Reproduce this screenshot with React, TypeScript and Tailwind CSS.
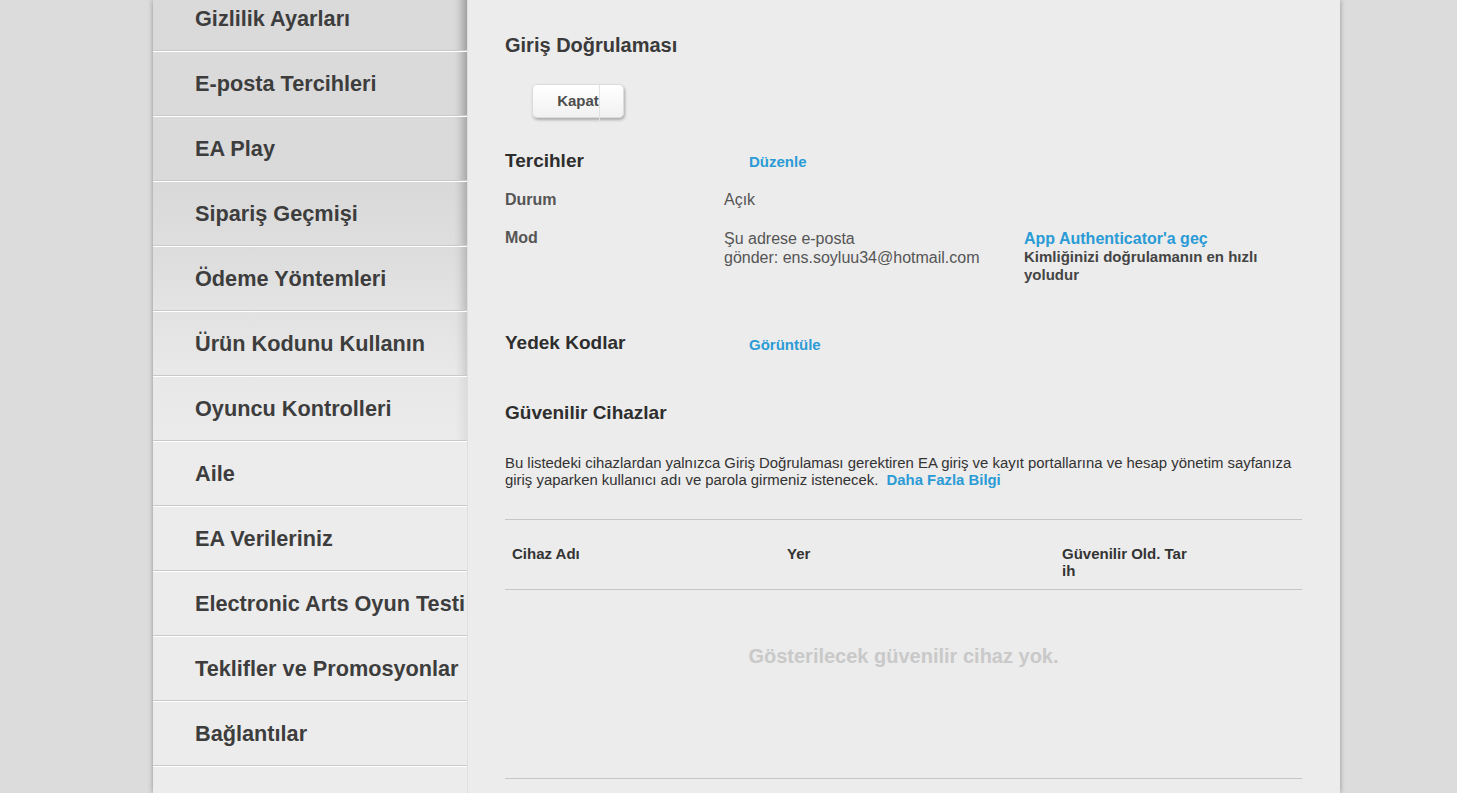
import React from "react";

const items: { label: string; cls: string }[] = [
  { label: "Gizlilik Ayarları", cls: "bg-[#dadada] shadow-[inset_-14px_0_10px_-10px_rgba(0,0,0,0.32)]" },
  { label: "E-posta Tercihleri", cls: "bg-[#dadada] shadow-[inset_-14px_0_10px_-10px_rgba(0,0,0,0.30)]" },
  { label: "EA Play", cls: "bg-[#dadada] shadow-[inset_-14px_0_10px_-10px_rgba(0,0,0,0.27)]" },
  { label: "Sipariş Geçmişi", cls: "bg-[linear-gradient(to_bottom,#d9d9d9,#dedede)] shadow-[inset_-14px_0_10px_-10px_rgba(0,0,0,0.24)]" },
  { label: "Ödeme Yöntemleri", cls: "bg-[linear-gradient(to_bottom,#dcdcdc,#e4e4e4)] shadow-[inset_-14px_0_10px_-10px_rgba(0,0,0,0.2)]" },
  { label: "Ürün Kodunu Kullanın", cls: "bg-[linear-gradient(to_bottom,#e2e2e2,#e9e9e9)] shadow-[inset_-14px_0_10px_-10px_rgba(0,0,0,0.14)]" },
  { label: "Oyuncu Kontrolleri", cls: "bg-[linear-gradient(to_bottom,#e8e8e8,#ebebeb)] shadow-[inset_-14px_0_10px_-10px_rgba(0,0,0,0.07)]" },
  { label: "Aile", cls: "bg-[#ececec]" },
  { label: "EA Verileriniz", cls: "bg-[#ececec]" },
  { label: "Electronic Arts Oyun Testi", cls: "bg-[#ececec]" },
  { label: "Teklifler ve Promosyonlar", cls: "bg-[#ececec]" },
  { label: "Bağlantılar", cls: "bg-[#ececec]" },
];

export default function App() {
  return (
    <div
      className="h-[793px] w-full overflow-hidden bg-[#dcdcdc]"
      style={{ fontFamily: '"Liberation Sans", Arial, sans-serif' }}
    >
      <div className="ml-[153px] flex h-full w-[1187px] bg-[#ececec] shadow-[0_0_5px_rgba(0,0,0,0.35)]">
        {/* Sidebar */}
        <div className="flex w-[315px] shrink-0 flex-col overflow-hidden border-r border-[#dfdfdf] bg-[#ececec]">
          <div className="-mt-[14px] flex flex-col">
            {items.map((it) => (
              <div
                key={it.label}
                className={`flex h-[65px] items-center overflow-hidden whitespace-nowrap border-t border-b border-t-white border-b-[#c9c9c9] pl-[42px] pt-[2px] text-[21.7px] font-bold text-[#3d3d3d] ${it.cls}`}
              >
                {it.label}
              </div>
            ))}
            <div className="h-[40px] border-t border-white bg-[#ececec]" />
          </div>
        </div>

        {/* Main */}
        <div className="flex flex-1 flex-col pl-[37px] pr-[38px] pt-[34px] text-[#555]">
          <h2 className="text-[20px] font-bold leading-[22px] text-[#3a3a3a]">Giriş Doğrulaması</h2>

          <button className="relative ml-[27px] mt-[28px] h-[34px] w-[92px] rounded-[5px] border border-[#dcdcdc] bg-[linear-gradient(to_bottom,#ffffff,#f1f1f1)] text-[15px] font-bold text-[#4d4d4d] shadow-[1px_2px_3px_rgba(0,0,0,0.28)]">
            Kapat
            <span className="absolute left-[66px] top-0 h-[37px] w-px bg-[#e2e2e2]" />
          </button>

          <div className="mt-[32px] flex items-center">
            <div className="w-[244px] text-[19px] font-bold leading-[22px] text-[#2e2e2e]">Tercihler</div>
            <div className="pt-[2px] text-[15px] font-bold leading-[18px] text-[#2b9bd6]">Düzenle</div>
          </div>

          <div className="mt-[19px] flex text-[16px] leading-[18px]">
            <div className="w-[219px] font-bold text-[#555]">Durum</div>
            <div className="text-[#555]">Açık</div>
          </div>

          <div className="mt-[20px] flex text-[16px] leading-[18px]">
            <div className="w-[219px] font-bold text-[#555]">Mod</div>
            <div className="w-[300px] leading-[19px] text-[#555]">
              Şu adrese e-posta
              <br />
              gönder: ens.soyluu34@hotmail.com
            </div>
            <div className="w-[250px]">
              <div className="text-[16px] font-bold leading-[19px] text-[#2b9bd6]">App Authenticator'a geç</div>
              <div className="text-[15px] font-bold leading-[18px] text-[#444]">
                Kimliğinizi doğrulamanın en hızlı yoludur
              </div>
            </div>
          </div>

          <div className="mt-[48px] flex items-center">
            <div className="w-[244px] text-[19px] font-bold leading-[22px] text-[#2e2e2e]">Yedek Kodlar</div>
            <div className="pt-[4px] text-[15px] font-bold leading-[18px] text-[#2b9bd6]">Görüntüle</div>
          </div>

          <h3 className="mt-[48px] text-[19px] font-bold leading-[22px] text-[#2e2e2e]">Güvenilir Cihazlar</h3>

          <p className="mt-[31px] text-[14.9px] leading-[17px] text-[#333]">
            Bu listedeki cihazlardan yalnızca Giriş Doğrulaması gerektiren EA giriş ve kayıt portallarına ve hesap yönetim sayfanıza giriş yaparken kullanıcı adı ve parola girmeniz istenecek.{"\u00a0 "}
            <span className="font-bold text-[#2b9bd6]">Daha Fazla Bilgi</span>
          </p>

          <div className="mt-[30px] border-t border-[#c6c6c6]">
            <div className="flex h-[70px] border-b border-[#c6c6c6] pt-[25px] text-[15px] font-bold leading-[17px] text-[#333]">
              <div className="w-[275px] px-[7px]">Cihaz Adı</div>
              <div className="w-[275px] px-[7px]">Yer</div>
              <div className="w-[142px] break-all px-[7px]">Güvenilir Old. Tarih</div>
            </div>
            <div className="flex h-[189px] justify-center border-b border-[#c6c6c6] pt-[54px]">
              <div className="text-[20px] font-bold leading-[24px] text-[#c9c9c9]">Gösterilecek güvenilir cihaz yok.</div>
            </div>
          </div>
        </div>
      </div>
    </div>
  );
}
